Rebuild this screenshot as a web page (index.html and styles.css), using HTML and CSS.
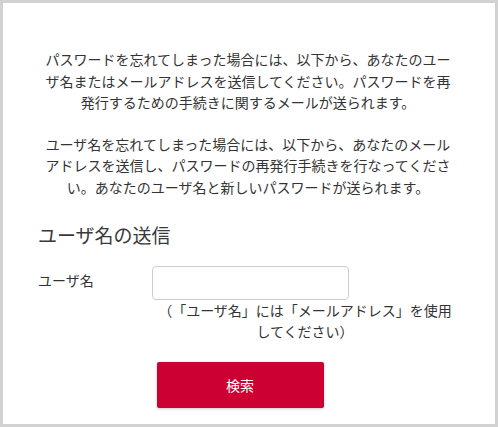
FILE: index.html
```html
<!DOCTYPE html>
<html lang="ja">
<head>
    <meta charset="UTF-8">
    <meta name="viewport" content="width=device-width, initial-scale=1.0">
    <title>パスワードの再発行</title>
    <link rel="stylesheet" href="styles.css">
</head>
<body>

    <!-- Reminder form -->
    <div class="panel">
        <div class="intro">
            <p>パスワードを忘れてしまった場合には、以下から、あなたのユーザ名またはメールアドレスを送信してください。パスワードを再発行するための手続きに関するメールが送られます。</p>
            <p>ユーザ名を忘れてしまった場合には、以下から、あなたのメールアドレスを送信し、パスワードの再発行手続きを行なってください。あなたのユーザ名と新しいパスワードが送られます。</p>
        </div>

        <h2 class="section-title">ユーザ名の送信</h2>

        <div class="form-row">
            <label class="form-label" for="username">ユーザ名</label>
            <div class="form-field">
                <input type="text" id="username" class="text-input">
                <p class="note">（「ユーザ名」には「メールアドレス」を使用してください）</p>
            </div>
        </div>

        <div class="actions">
            <button class="search-button">検索</button>
        </div>
    </div>

</body>
</html>
```

FILE: styles.css
```css
html, body {
    margin: 0;
    padding: 0;
}

body {
    font-family: "Noto Sans CJK JP", "Noto Sans", sans-serif;
    font-size: 14px;
    color: #333;
    background-color: #ffffff;
    text-spacing-trim: space-all;
}

/* Outer frame */
.panel {
    box-sizing: border-box;
    width: 498px;
    height: 427px;
    border: 3px solid #d2d2d2;
    padding: 46px 37px 0 35px;
}

/* Intro text */
.intro {
    padding: 0 3px;
}
.intro p {
    margin: 0 0 20px 0;
    line-height: 21.5px;
    text-align: center;
}

.section-title {
    margin: 24px 0 0 0;
    font-size: 19px;
    font-weight: normal;
    line-height: 26px;
    color: #3a3a3a;
}

/* Username row */
.form-row {
    display: flex;
    margin-top: 18px;
}
.form-label {
    width: 114px;
    padding-top: 4px;
    line-height: 21px;
}
.form-field {
    flex: 1;
}
.text-input {
    display: block;
    box-sizing: border-box;
    width: 197px;
    height: 34px;
    border: 1px solid #c9ced6;
    border-radius: 4px;
    padding: 4px 8px;
    font-size: 14px;
}
.note {
    margin: 0;
    line-height: 21px;
    text-align: center;
}

/* Button */
.actions {
    display: flex;
    justify-content: center;
    padding-right: 16px;
    margin-top: 20px;
}
.search-button {
    width: 167px;
    height: 46px;
    border: none;
    border-radius: 2px;
    background-color: #cc0033;
    color: #ffffff;
    font-family: "Noto Sans CJK JP", sans-serif;
    font-size: 14px;
    text-spacing-trim: space-all;
    box-shadow: 0 1px 3px rgba(0, 0, 0, 0.2);
    cursor: pointer;
}
```
